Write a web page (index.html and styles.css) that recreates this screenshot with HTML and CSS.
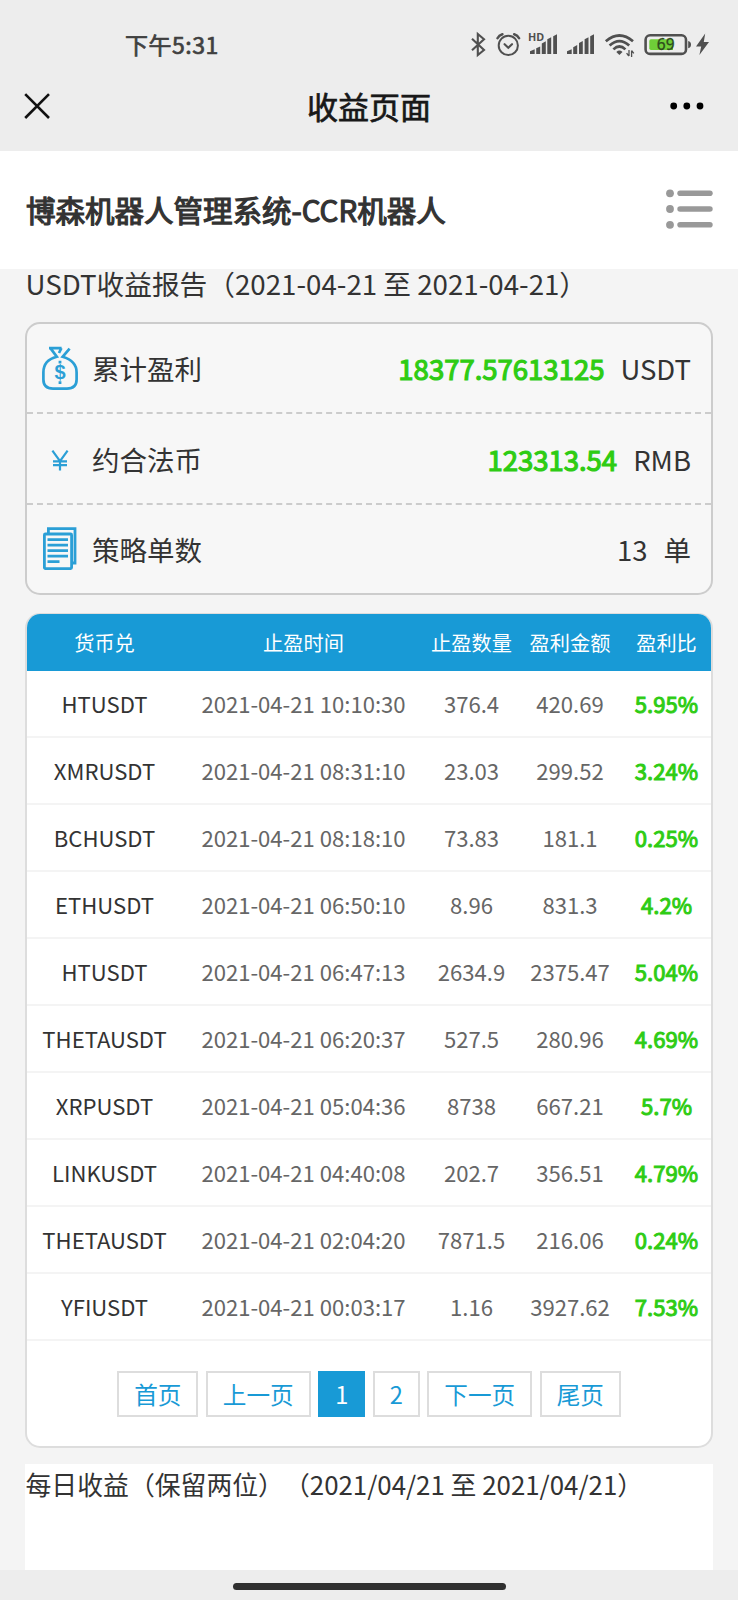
FILE: index.html
```html
<!DOCTYPE html>
<html lang="zh-CN">
<head>
<meta charset="utf-8">
<title>收益页面</title>
<link rel="stylesheet" href="styles.css">
</head>
<body>
<div class="screen">
  <header class="chrome">
    <div class="status">
      <span class="clock">下午5:31</span>
      <svg class="status-icons" width="242" height="28" viewBox="470 30 242 28">
        <path d="M472 38.8 L484 50 L477.8 55 V34 L484 39.2 L472 50.2" fill="none" stroke="#505050" stroke-width="2.1"/>
        <g fill="none" stroke="#505050" stroke-width="2" stroke-linecap="round">
          <circle cx="508.3" cy="45.4" r="9.6"/>
          <path d="M504.6 44.2 L508.3 47.7 L512 44.2" stroke-width="2.1"/>
          <path d="M497.5 38.2 Q499 35.2 502.4 34.2 M519.1 38.2 Q517.6 35.2 514.2 34.2" stroke-width="2.5"/>
        </g>
        <text class="hd" x="528" y="41.2">HD</text>
        <g fill="#505050">
          <path d="M530 54 V51.2 L534.7 49.2 V54Z M536.2 54 V48.2 L540.2 46.4 V54Z M541.8 54 V43.4 L545.8 41.3 V54Z M547.3 54 V39.2 L551.2 37.3 V54Z M553.2 54 V36.2 L557 34.2 V54Z"/>
          <path d="M567 54 V51.2 L571.7 49.2 V54Z M573.2 54 V47.2 L577.2 45 V54Z M579 54 V43 L582.8 41 V54Z M584.6 54 V39.2 L588.5 37.2 V54Z M590.2 54 V36.2 L594 34.2 V54Z"/>
        </g>
        <g fill="none" stroke="#505050" stroke-width="2.7">
          <path d="M605.8 41.2 Q619.4 29.8 633 41.2"/>
          <path d="M609.6 45.5 Q619.4 36.6 629.2 45.5"/>
          <path d="M613.4 49.4 Q619.4 43.6 625.4 49.4"/>
        </g>
        <path d="M616.3 52 Q619.4 49.2 622.5 52 L619.4 55Z" fill="#505050"/>
        <path d="M629 50 V56 M628.8 56 L626.6 53.2 M631.6 57 V50.4 M631.7 50.6 L633.8 53.4" stroke="#505050" stroke-width="1.3" fill="none"/>
        <rect x="645.6" y="35.3" width="40.4" height="18.6" rx="4.5" fill="none" stroke="#505050" stroke-width="2.6"/>
        <path d="M651 39.2 H673 V50 H651 Q649.3 50 649.3 48.3 V41 Q649.3 39.2 651 39.2Z" fill="#6fce38"/>
        <path d="M688.2 41 Q691 41.5 691 44.6 Q691 47.7 688.2 48.2Z" fill="#505050"/>
        <text class="level" x="656.8" y="50.4">69</text>
        <path d="M705.2 33.6 L696 46.4 H701.2 L699.4 55 L709 42 H703.8Z" fill="#505050"/>
      </svg>
    </div>
    <div class="nav">
      <svg class="close" width="28" height="28" viewBox="0 0 28 28"><path d="M2.2 2.2 L26 26 M26 2.2 L2.2 26" stroke="#111" stroke-width="2.6" fill="none"/></svg>
      <h1 class="nav-title">收益页面</h1>
      <svg class="more" width="34" height="8" viewBox="0 0 34 8"><circle cx="3.7" cy="4" r="3.4"/><circle cx="16.8" cy="4" r="3.4"/><circle cx="30" cy="4" r="3.4"/></svg>
    </div>
  </header>

  <div class="site-bar">
    <h2 class="site-title">博森机器人管理系统-CCR机器人</h2>
    <svg class="menu" width="48" height="40" viewBox="0 0 48 40" fill="#999">
      <circle cx="5" cy="4.3" r="3.9"/><circle cx="5" cy="20" r="3.9"/><circle cx="5" cy="35.8" r="3.9"/>
      <rect x="12.3" y="1.5" width="35.4" height="5.6" rx="2.8"/><rect x="12.3" y="17.2" width="35.4" height="5.6" rx="2.8"/><rect x="12.3" y="33" width="35.4" height="5.6" rx="2.8"/>
    </svg>
  </div>

  <main class="content">
    <div class="report-title">USDT收益报告（2021-04-21 至 2021-04-21）</div>

    <section class="summary">
      <div class="item">
        <svg class="item-icon" width="36" height="46" viewBox="0 0 36 46" fill="none" stroke="#2b9fd6" stroke-width="2.7">
          <path d="M7 3.2 H19.6 M8.6 3.4 L14.8 11.8 C6 14 1.4 19.8 1.4 27.4 V34.5 Q1.4 43.6 11 43.6 H25 Q34.6 43.6 34.6 34.5 V27.4 C34.6 19.8 30 14.6 20.6 11.8 L27.6 3.6 M19.4 3.2 L17 8"/>
          <text class="bag-sign" x="18" y="33.9" text-anchor="middle">$</text>
          <path d="M18 15.8 V18.6 M18 36.2 V39" stroke-width="2.8"/>
        </svg>
        <span class="label">累计盈利</span>
        <span class="value"><b class="gain">18377.57613125</b><span class="unit">USDT</span></span>
      </div>
      <div class="item">
        <svg class="item-icon" width="36" height="46" viewBox="0 0 36 46" fill="none" stroke="#2b9fd6" stroke-width="2.2">
          <path d="M10.4 14.6 L18 25.2 L25.6 14.6 M18 25.2 V34.6 M11 25.4 H25 M11 29.2 H25"/>
        </svg>
        <span class="label">约合法币</span>
        <span class="value"><b class="gain">123313.54</b><span class="unit">RMB</span></span>
      </div>
      <div class="item">
        <svg class="item-icon" width="36" height="46" viewBox="0 0 36 46" fill="none" stroke="#2b9fd6" stroke-width="2.8">
          <rect x="2.4" y="8" width="27.2" height="34.6" rx="1"/>
          <path d="M6.4 7 V2.6 H33 V37 H30"/>
          <path d="M5.5 13.6 H26 M5.5 19.2 H26 M5.5 24.7 H26 M5.5 30.2 H26 M5.5 35.7 H17.5"/>
        </svg>
        <span class="label">策略单数</span>
        <span class="value"><span>13</span><span class="unit">单</span></span>
      </div>
    </section>

    <section class="orders">
      <table class="grid">
        <colgroup><col class="c-pair"><col class="c-time"><col class="c-qty"><col class="c-sum"><col class="c-rate"></colgroup>
        <thead><tr><th>货币兑</th><th>止盈时间</th><th>止盈数量</th><th>盈利金额</th><th>盈利比</th></tr></thead>
        <tbody>
          <tr><td>HTUSDT</td><td>2021-04-21 10:10:30</td><td>376.4</td><td>420.69</td><td>5.95%</td></tr>
          <tr><td>XMRUSDT</td><td>2021-04-21 08:31:10</td><td>23.03</td><td>299.52</td><td>3.24%</td></tr>
          <tr><td>BCHUSDT</td><td>2021-04-21 08:18:10</td><td>73.83</td><td>181.1</td><td>0.25%</td></tr>
          <tr><td>ETHUSDT</td><td>2021-04-21 06:50:10</td><td>8.96</td><td>831.3</td><td>4.2%</td></tr>
          <tr><td>HTUSDT</td><td>2021-04-21 06:47:13</td><td>2634.9</td><td>2375.47</td><td>5.04%</td></tr>
          <tr><td>THETAUSDT</td><td>2021-04-21 06:20:37</td><td>527.5</td><td>280.96</td><td>4.69%</td></tr>
          <tr><td>XRPUSDT</td><td>2021-04-21 05:04:36</td><td>8738</td><td>667.21</td><td>5.7%</td></tr>
          <tr><td>LINKUSDT</td><td>2021-04-21 04:40:08</td><td>202.7</td><td>356.51</td><td>4.79%</td></tr>
          <tr><td>THETAUSDT</td><td>2021-04-21 02:04:20</td><td>7871.5</td><td>216.06</td><td>0.24%</td></tr>
          <tr><td>YFIUSDT</td><td>2021-04-21 00:03:17</td><td>1.16</td><td>3927.62</td><td>7.53%</td></tr>
        </tbody>
      </table>
      <nav class="pager">
        <a class="page">首页</a><a class="page">上一页</a><a class="page current">1</a><a class="page">2</a><a class="page">下一页</a><a class="page">尾页</a>
      </nav>
    </section>

    <section class="daily">每日收益（保留两位）（2021/04/21 至 2021/04/21）</section>
  </main>

  <footer class="home"><div class="home-bar"></div></footer>
</div>
</body>
</html>
```

FILE: styles.css
```css
* { box-sizing: border-box; }
body {
  margin: 0;
  font-family: "Noto Sans CJK SC", sans-serif;
  color: #333;
  background: #f4f4f4;
}
.screen {
  display: flex;
  flex-direction: column;
  width: 738px;
  height: 1600px;
  overflow: hidden;
}
.chrome { height: 151px; flex: none; background: #ededed; }
.status {
  display: flex;
  justify-content: space-between;
  align-items: center;
  height: 58px;
  padding: 30px 26px 0 125px;
}
.clock {
  font-size: 23px;
  line-height: 26px;
  letter-spacing: 0.5px;
  color: #404040;
  -webkit-text-stroke: 0.7px #404040;
}
.status-icons { display: block; }
.hd { font: bold 10.8px "Noto Sans", sans-serif; fill: #505050; }
.level { font: 15.5px "Noto Sans", sans-serif; fill: #2d4a1c; stroke: #2d4a1c; stroke-width: 0.3px; }
.bag-sign { font: bold 20px "Liberation Sans", sans-serif; fill: #2b9fd6; stroke: none; }
.nav {
  display: flex;
  justify-content: space-between;
  align-items: center;
  height: 96px;
  padding: 0 34px 0 23px;
}
.nav-title {
  margin: 0;
  padding-left: 17px;
  font-size: 31px;
  line-height: 40px;
  font-weight: 400;
  color: #181818;
  -webkit-text-stroke: 0.7px #181818;
}
.site-bar {
  display: flex;
  justify-content: space-between;
  align-items: center;
  flex: none;
  height: 118px;
  padding: 0 25px 2px 26px;
  background: #fff;
}
.site-title {
  margin: 0;
  font-size: 29.5px;
  line-height: 40px;
  font-weight: 400;
  -webkit-text-stroke: 1.2px #333;
}
.content { flex: 1; min-height: 0; padding: 0 25px; }
.report-title {
  height: 53px;
  padding-left: 0.5px;
  font-size: 27.7px;
  line-height: 28px;
  white-space: nowrap;
}
.summary {
  height: 273px;
  width: 688px;
  border: 2px solid #ccc;
  border-radius: 15px;
  background: #f7f7f7;
}
.item {
  display: flex;
  align-items: center;
  height: 88.4px;
  padding: 0 20px 0 15px;
  font-size: 27.5px;
  line-height: 40px;
}
.item + .item { height: 90.3px; border-top: 2px dashed #ccc; }
.item-icon { flex: none; margin-right: 14px; }
.label { flex: 1; }
.value { display: flex; gap: 16px; }
.gain { font-weight: 400; color: #2ecc14; -webkit-text-stroke: 1.2px #2ecc14; }
.orders {
  height: 835px;
  width: 688px;
  margin-top: 18px;
  border: 2px solid #ddd;
  border-top-width: 1px;
  border-radius: 15px;
  background: #fff;
  overflow: hidden;
}
.grid { width: 684px; table-layout: fixed; border-collapse: separate; border-spacing: 0; }
.c-pair { width: 155px; }
.c-time { width: 243px; }
.c-qty { width: 93px; }
.c-sum { width: 104px; }
.c-rate { width: 89px; }
.grid th {
  height: 57px;
  padding: 0;
  background: #189ad6;
  color: #fff;
  font-size: 20.2px;
  line-height: 28px;
  font-weight: 400;
}
.grid td {
  height: 67px;
  padding: 0 0 2px;
  border-bottom: 2px solid #f4f4f4;
  text-align: center;
  font-size: 22.1px;
  line-height: 32px;
  color: #666;
  white-space: nowrap;
}
.grid td:first-child { color: #333; }
.grid td:last-child { color: #2ecc14; -webkit-text-stroke: 1px #2ecc14; }
.pager {
  display: flex;
  justify-content: center;
  gap: 7.5px;
  padding-top: 30px;
}
.page {
  height: 46px;
  padding: 0 15px;
  border: 2px solid #ddd;
  color: #189ad6;
  font-size: 23.6px;
  line-height: 42px;
}
.current { border-color: #189ad6; background: #189ad6; color: #fff; }
.daily {
  height: 106px;
  width: 688px;
  margin-top: 16px;
  padding-left: 0.5px;
  background: #fff;
  font-size: 25.85px;
  line-height: 39px;
  white-space: nowrap;
  text-spacing-trim: space-all;
}
.home {
  flex: none;
  height: 30px;
  padding-top: 13px;
  background: #ededed;
}
.home-bar { width: 273px; height: 7px; margin: 0 auto; border-radius: 4px; background: #303030; }
```
